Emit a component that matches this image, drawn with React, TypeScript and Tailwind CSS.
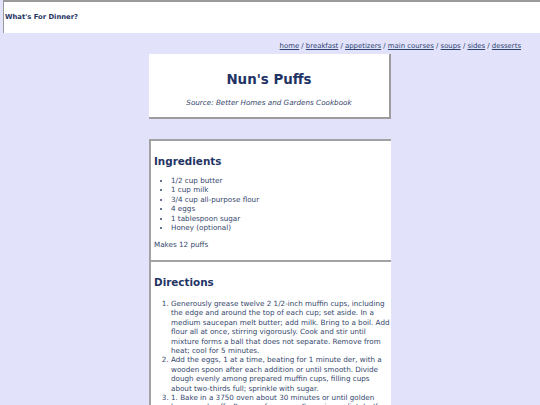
const links = ["home", "breakfast", "appetizers", "main courses", "soups", "sides", "desserts"]

const ingredients = [
  "1/2 cup butter",
  "1 cup milk",
  "3/4 cup all-purpose flour",
  "4 eggs",
  "1 tablespoon sugar",
  "Honey (optional)",
]

const directions = [
  "Generously grease twelve 2 1/2-inch muffin cups, including the edge and around the top of each cup; set aside. In a medium saucepan melt butter; add milk. Bring to a boil. Add flour all at once, stirring vigorously. Cook and stir until mixture forms a ball that does not separate. Remove from heat; cool for 5 minutes.",
  "Add the eggs, 1 at a time, beating for 1 minute der, with a wooden spoon after each addition or until smooth. Divide dough evenly among prepared muffin cups, filling cups about two-thirds full; sprinkle with sugar.",
  "1. Bake in a 3750 oven about 30 minutes or until golden brown and puffy. Remove from pan. Serve immediately. If desired, serve with honey.",
]

export default function App() {
  return (
    <div
      className="min-h-screen bg-[#e2e2fa] text-[#34466c] text-[7.2px] leading-[9.4px]"
      style={{ fontFamily: '"DejaVu Sans", Verdana, sans-serif' }}
    >
      {/* site header */}
      <header className="ml-[3px] h-[33px] bg-white border-t-2 border-l border-t-[#9a9a9a] border-l-[#9a9a9a] flex items-center pl-[1px] pt-[1px]">
        <h1 className="text-[6.8px] font-bold text-[#1f3464]">What's For Dinner?</h1>
      </header>

      <nav className="flex justify-end pr-[19px] pt-[9px] h-[21px] text-[6.9px] text-[#2d4472]">
        {links.map((l, i) => (
          <span key={l} className="whitespace-pre">
            <a href="#" className="underline">{l}</a>
            {i < links.length - 1 ? " / " : ""}
          </span>
        ))}
      </nav>

      <main className="w-[242px] mx-auto flex flex-col">
        <section className="h-[65px] bg-white border-r-2 border-b-2 border-r-[#9c9c9c] border-b-[#9c9c9c] flex flex-col items-center pt-[17px]">
          <h2 className="text-[13.4px] leading-[18px] font-bold text-[#1f3464]">Nun's Puffs</h2>
          <p className="italic mt-[9px] text-[#34466c]">Source: Better Homes and Gardens Cookbook</p>
        </section>

        <section className="mt-[20px] h-[121px] bg-white border-t-2 border-l-2 border-t-[#a2a2a2] border-l-[#a2a2a2] pl-[3px] pt-[13px]">
          <h3 className="text-[10.4px] leading-[14px] font-bold text-[#1f3464]">Ingredients</h3>
          <ul className="list-disc pl-[17px] mt-[8px]">
            {ingredients.map((x) => (
              <li key={x}>{x}</li>
            ))}
          </ul>
          <p className="mt-[8px]">Makes 12 puffs</p>
        </section>

        <section className="h-[200px] bg-white border-t-2 border-l-2 border-t-[#a2a2a2] border-l-[#a2a2a2] pl-[3px] pt-[13px]">
          <h3 className="text-[10.4px] leading-[14px] font-bold text-[#1f3464]">Directions</h3>
          <ol className="list-decimal pl-[17px] mt-[10px]">
            {directions.map((x) => (
              <li key={x}>{x}</li>
            ))}
          </ol>
        </section>
      </main>
    </div>
  )
}
